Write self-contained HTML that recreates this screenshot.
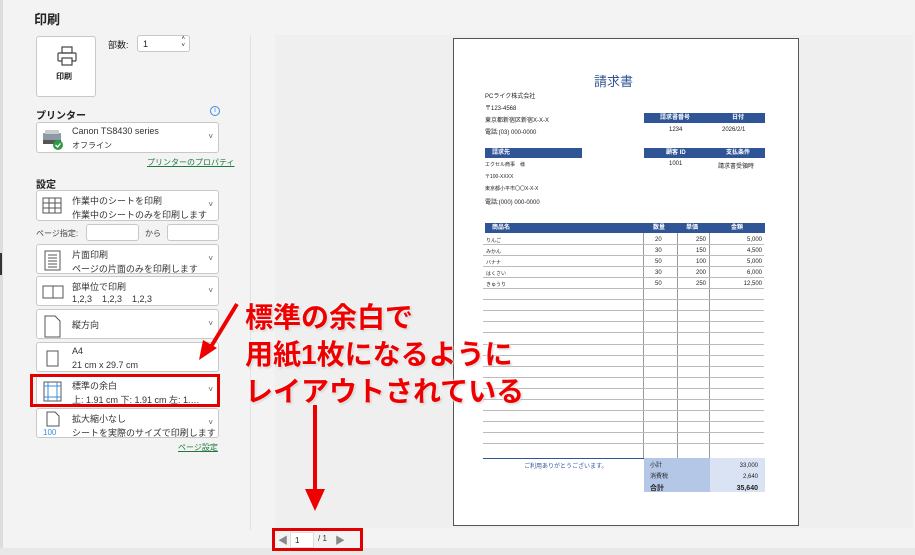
<!DOCTYPE html>
<html><head><meta charset="utf-8"><style>
*{margin:0;padding:0;box-sizing:border-box}
body{width:915px;height:555px;overflow:hidden;background:#f3f3f3;font-family:"Liberation Sans","Noto Sans CJK JP",sans-serif;position:relative;color:#222}
.a{position:absolute}
.box{position:absolute;background:#fff;border:1px solid #c8c8c8;border-radius:3px}
.t1{position:absolute;left:35px;font-size:9px;color:#333}
.t2{position:absolute;left:35px;font-size:9px;color:#333}
.chev{position:absolute;right:5px;font-size:8px;color:#555}
.ic{position:absolute;left:4px;top:4px}
.pg{font-size:6px;color:#222}
.hb{background:#2f5597;color:#fff;font-weight:bold;font-size:6px;position:absolute;height:10px;line-height:10px}
.r{position:absolute;left:483px;width:281px;height:1px;background:#bbb}
.red{color:#e00;font-weight:bold;font-size:28px;position:absolute;text-shadow:0 0 2px #fff,0 0 3px #fff,1px 1px 2px #aaa;white-space:nowrap;letter-spacing:0}
</style></head><body>
<div class="a" style="left:0;top:0;width:3px;height:555px;background:#ddd"></div>
<div class="a" style="left:250px;top:35px;width:1px;height:495px;background:#e2e2e2"></div>
<div class="a" style="left:275px;top:35px;width:638px;height:493px;background:#efefef"></div>
<div class="a" style="left:0;top:548px;width:915px;height:7px;background:#e8e8e8"></div>
<div class="a" style="left:34px;top:9px;font-size:13px;font-weight:bold">印刷</div>

<div class="box" style="left:36px;top:36px;width:60px;height:61px">
<svg class="a" style="left:19px;top:8px" width="22" height="22" viewBox="0 0 22 22" fill="none" stroke="#444" stroke-width="1.2"><rect x="6" y="2" width="10" height="6"/><rect x="2" y="8" width="18" height="8" rx="1"/><rect x="6" y="13" width="10" height="7" fill="#fff"/></svg>
<div class="a" style="left:19px;top:34px;font-size:8px;font-weight:bold">印刷</div></div>
<div class="a" style="left:108px;top:38px;font-size:9px">部数:</div>
<div class="box" style="left:137px;top:35px;width:53px;height:17px;font-size:9px;padding:3px 0 0 5px">1<span class="a" style="right:4px;top:0;font-size:6px;line-height:7px">˄<br>˅</span></div>

<div class="a" style="left:36px;top:107px;font-size:10px;font-weight:bold">プリンター</div>
<div class="a" style="left:210px;top:106px;width:10px;height:10px;border:1px solid #3a8de0;border-radius:50%;font-size:7px;color:#3a8de0;text-align:center;line-height:8px">i</div>
<div class="box" style="left:36px;top:122px;width:183px;height:31px">
<svg class="ic" style="top:6px" width="24" height="22"><rect x="2" y="4" width="18" height="8" fill="#8a9aa6" rx="1"/><rect x="4" y="1" width="14" height="4" fill="#ccc"/><rect x="2" y="11" width="18" height="4" fill="#555"/><circle cx="17" cy="16" r="5" fill="#2e9b46"/><path d="M14.5 16l2 2 3-3.5" stroke="#fff" stroke-width="1.3" fill="none"/></svg>
<div class="t1" style="top:3px">Canon TS8430 series</div><div class="t2" style="top:17px;font-size:8px">オフライン</div><div class="chev" style="top:9px">˅</div></div>
<div class="a" style="left:147px;top:157px;font-size:8px;color:#1e7a3c;text-decoration:underline">プリンターのプロパティ</div>

<div class="a" style="left:36px;top:176px;font-size:10px;font-weight:bold">設定</div>
<div class="box" style="left:36px;top:190px;width:183px;height:31px">
<svg class="ic" width="24" height="22" fill="none" stroke="#555" stroke-width="1"><rect x="2" y="3" width="18" height="15"/><path d="M2 8h18M2 13h18M8 3v15M14 3v15"/></svg>
<div class="t1" style="top:3px">作業中のシートを印刷</div><div class="t2" style="top:17px">作業中のシートのみを印刷します</div><div class="chev" style="top:9px">˅</div></div>
<div class="a" style="left:36px;top:228px;font-size:8px;color:#444">ページ指定:</div>
<div class="box" style="left:86px;top:224px;width:53px;height:17px"></div>
<div class="a" style="left:145px;top:228px;font-size:8px;color:#444">から</div>
<div class="box" style="left:167px;top:224px;width:52px;height:17px"></div>
<div class="box" style="left:36px;top:244px;width:183px;height:30px">
<svg class="ic" width="24" height="22" fill="none" stroke="#555" stroke-width="1"><rect x="4" y="2" width="15" height="19"/><path d="M7 6h9M7 9h9M7 12h9M7 15h9M7 18h9"/></svg>
<div class="t1" style="top:3px">片面印刷</div><div class="t2" style="top:17px">ページの片面のみを印刷します</div><div class="chev" style="top:9px">˅</div></div>
<div class="box" style="left:36px;top:276px;width:183px;height:30px">
<svg class="ic" width="24" height="22" fill="none" stroke="#555" stroke-width="1"><rect x="2" y="5" width="10" height="12"/><rect x="12" y="5" width="10" height="12"/></svg>
<div class="t1" style="top:3px">部単位で印刷</div><div class="t2" style="top:17px">1,2,3&nbsp;&nbsp;&nbsp; 1,2,3&nbsp;&nbsp;&nbsp; 1,2,3</div><div class="chev" style="top:9px">˅</div></div>
<div class="box" style="left:36px;top:309px;width:183px;height:30px">
<svg class="ic" width="24" height="24" fill="none" stroke="#555" stroke-width="1"><path d="M4 2h10l5 5v16H4z"/></svg>
<div class="t1" style="top:8px">縦方向</div><div class="chev" style="top:9px">˅</div></div>
<div class="box" style="left:36px;top:342px;width:183px;height:30px">
<svg class="ic" width="24" height="24" fill="none" stroke="#555" stroke-width="1"><rect x="6" y="4" width="11" height="15"/></svg>
<div class="t1" style="top:3px">A4</div><div class="t2" style="top:17px">21 cm x 29.7 cm</div></div>
<div class="box" style="left:36px;top:375px;width:183px;height:30px">
<svg class="ic" width="24" height="24" fill="none" stroke-width="1"><rect x="3" y="2" width="17" height="19" stroke="#555"/><path d="M3 6h17M3 17h17M7 2v19M16 2v19" stroke="#3a8de0"/></svg>
<div class="t1" style="top:3px">標準の余白</div><div class="t2" style="top:17px">上: 1.91 cm 下: 1.91 cm 左: 1.…</div><div class="chev" style="top:9px">˅</div></div>
<div class="a" style="left:30px;top:374px;width:190px;height:33px;border:3px solid #e00000"></div>
<div class="box" style="left:36px;top:408px;width:183px;height:30px">
<svg class="ic" style="top:1px" width="24" height="26" fill="none" stroke="#555" stroke-width="1"><path d="M6 2h8l4 4v10H6z"/><text x="2" y="25" font-size="8" fill="#3a8de0" stroke="none" font-family="Liberation Sans">100</text></svg>
<div class="t1" style="top:3px">拡大縮小なし</div><div class="t2" style="top:17px">シートを実際のサイズで印刷します</div><div class="chev" style="top:9px">˅</div></div>
<div class="a" style="left:178px;top:442px;font-size:8px;color:#1e7a3c;text-decoration:underline">ページ設定</div>

<!-- page -->
<div class="a" style="left:453px;top:38px;width:346px;height:488px;background:#fff;border:1px solid #555"></div>
<div class="a" style="left:594px;top:71px;font-size:13px;color:#2f5597">請求書</div>
<div class="a pg" style="left:485px;top:91px">PCライク株式会社</div>
<div class="a pg" style="left:485px;top:103px">〒123-4568</div>
<div class="a pg" style="left:485px;top:115px">東京都新宿区新宿X-X-X</div>
<div class="a pg" style="left:485px;top:127px">電話:(03) 000-0000</div>
<div class="hb" style="left:644px;top:113px;width:121px"><span class="a" style="left:16px">請求書番号</span><span class="a" style="left:88px">日付</span></div>
<div class="a pg" style="left:669px;top:127px">1234</div><div class="a pg" style="left:722px;top:127px">2026/2/1</div>
<div class="hb" style="left:485px;top:148px;width:97px"><span class="a" style="left:7px">請求先</span></div>
<div class="hb" style="left:644px;top:148px;width:121px"><span class="a" style="left:22px">顧客 ID</span><span class="a" style="left:82px">支払条件</span></div>
<div class="a pg" style="left:669px;top:161px">1001</div><div class="a pg" style="left:718px;top:161px">請求書受領時</div>
<div class="a pg" style="left:485px;top:161px;font-size:5px">エクセル商事　様</div>
<div class="a pg" style="left:485px;top:173px;font-size:5px">〒100-XXXX</div>
<div class="a pg" style="left:485px;top:185px;font-size:5px">東京都小平市〇〇X-X-X</div>
<div class="a pg" style="left:485px;top:197px">電話:(000) 000-0000</div>
<div class="hb" style="left:485px;top:223px;width:280px"><span class="a" style="left:7px">商品名</span><span class="a" style="left:168px">数量</span><span class="a" style="left:201px">単価</span><span class="a" style="left:246px">金額</span></div>
<div class="a" style="left:643px;top:233px;width:1px;height:225px;background:#999"></div>
<div class="a" style="left:677px;top:233px;width:1px;height:225px;background:#999"></div>
<div class="a" style="left:709px;top:233px;width:1px;height:225px;background:#999"></div>
<div class="r" style="top:244px"></div><div class="r" style="top:255px"></div><div class="r" style="top:266px"></div><div class="r" style="top:277px"></div><div class="r" style="top:288px"></div><div class="r" style="top:299px"></div><div class="r" style="top:310px"></div><div class="r" style="top:321px"></div><div class="r" style="top:332px"></div><div class="r" style="top:344px"></div><div class="r" style="top:355px"></div><div class="r" style="top:366px"></div><div class="r" style="top:377px"></div><div class="r" style="top:388px"></div><div class="r" style="top:399px"></div><div class="r" style="top:410px"></div><div class="r" style="top:421px"></div><div class="r" style="top:432px"></div><div class="r" style="top:443px"></div>
<div class="a pg" style="left:486px;top:236px;font-size:5px;line-height:11px">りんご<br>みかん<br>バナナ<br>はくさい<br>きゅうり</div>
<div class="a pg" style="left:655px;top:235px;line-height:11px">20<br>30<br>50<br>30<br>50</div>
<div class="a pg" style="left:682px;top:235px;width:24px;text-align:right;line-height:11px">250<br>150<br>100<br>200<br>250</div>
<div class="a pg" style="left:720px;top:235px;width:42px;text-align:right;line-height:11px">5,000<br>4,500<br>5,000<br>6,000<br>12,500</div>
<div class="a" style="left:483px;top:458px;width:161px;height:1px;background:#2f5597"></div>
<div class="a pg" style="left:524px;top:461px;color:#2f5597">ご利用ありがとうございます。</div>
<div class="a" style="left:644px;top:458px;width:66px;height:34px;background:#b4c7e7"></div>
<div class="a" style="left:710px;top:458px;width:55px;height:34px;background:#dae3f3"></div>
<div class="a pg" style="left:650px;top:461px;line-height:11px">小計<br>消費税<br><b style="font-size:7px">合計</b></div>
<div class="a pg" style="left:712px;top:461px;width:46px;text-align:right;line-height:11px">33,000<br>2,640<br><b style="font-size:7px">35,640</b></div>

<!-- bottom nav -->
<div class="a" style="left:278px;top:532px;font-size:10px;color:#888">◀</div>
<div class="a" style="left:290px;top:532px;width:24px;height:16px;background:#fff;border:1px solid #ddd;font-size:8px;padding:3px 4px">1</div>
<div class="a" style="left:318px;top:534px;font-size:8px;color:#333">/ 1</div>
<div class="a" style="left:335px;top:532px;font-size:10px;color:#888">▶</div>
<div class="a" style="left:272px;top:528px;width:91px;height:23px;border:3px solid #e00000"></div>

<!-- annotations -->
<div class="red" style="left:245px;top:296px">標準の余白で</div>
<div class="red" style="left:245px;top:333px">用紙1枚になるように</div>
<div class="red" style="left:245px;top:370px">レイアウトされている</div>
<svg class="a" style="left:195px;top:300px" width="50" height="65"><path d="M42 4L14 50" stroke="#e00" stroke-width="4"/><path d="M4 60l4-20 14 8z" fill="#e00"/></svg>
<svg class="a" style="left:303px;top:405px" width="24" height="110"><path d="M12 0v90" stroke="#e00" stroke-width="4"/><path d="M2 84h20l-10 22z" fill="#e00"/></svg>
<div class="a" style="left:0;top:253px;width:2px;height:22px;background:#333"></div>
</body></html>
